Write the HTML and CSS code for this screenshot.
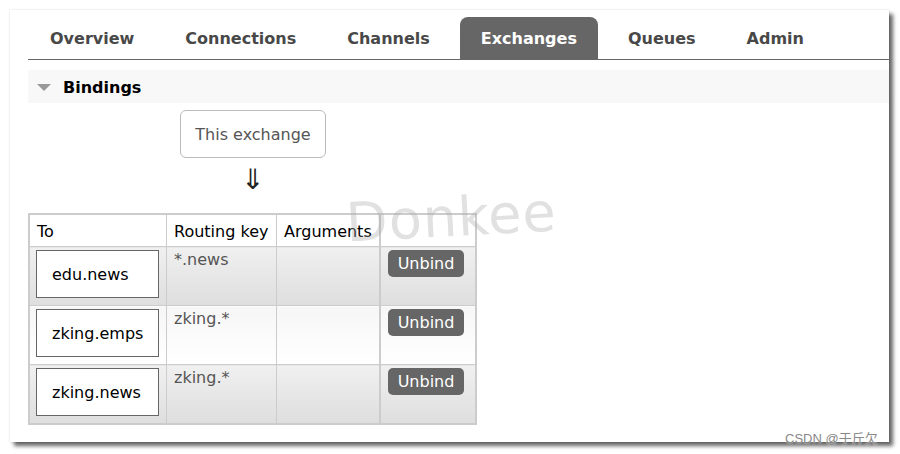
FILE: index.html
```html
<!DOCTYPE html>
<html lang="en">
<head>
    <meta charset="UTF-8">
    <meta name="viewport" content="width=device-width, initial-scale=1.0">
    <title>Exchange Bindings</title>
    <link rel="stylesheet" href="styles.css">
</head>
<body>
    <div class="panel">
        <ul class="tabs">
            <li>Overview</li>
            <li>Connections</li>
            <li>Channels</li>
            <li class="active">Exchanges</li>
            <li>Queues</li>
            <li>Admin</li>
        </ul>

        <div class="section">
            <h2 class="section-head"><span class="toggle"></span>Bindings</h2>
            <div class="flow">
                <div class="exchange-box">This exchange</div>
                <div class="arrow">&dArr;</div>
            </div>

            <table class="list">
                <thead>
                    <tr>
                        <th class="col-to">To</th>
                        <th class="col-key">Routing key</th>
                        <th class="col-args">Arguments</th>
                        <th class="col-action"></th>
                    </tr>
                </thead>
                <tbody>
                    <tr class="alt1">
                        <td><span class="queue">edu.news</span></td>
                        <td class="key">*.news</td>
                        <td></td>
                        <td class="action"><button>Unbind</button></td>
                    </tr>
                    <tr class="alt2">
                        <td><span class="queue">zking.emps</span></td>
                        <td class="key">zking.*</td>
                        <td></td>
                        <td class="action"><button>Unbind</button></td>
                    </tr>
                    <tr class="alt1">
                        <td><span class="queue">zking.news</span></td>
                        <td class="key">zking.*</td>
                        <td></td>
                        <td class="action"><button>Unbind</button></td>
                    </tr>
                </tbody>
            </table>
        </div>
    </div>

    <div class="watermark">Donkee</div>
    <div class="credit">CSDN @于斤欠</div>
</body>
</html>
```

FILE: styles.css
```css
body {
    margin: 0;
    padding: 10px;
    background-color: #fff;
    font-family: "DejaVu Sans", Verdana, sans-serif;
    font-size: 16px;
    color: #000;
    position: relative;
}
.panel {
    background-color: #fff;
    width: 879px;
    height: 432px;
    padding: 7px 0 0 18px;
    box-sizing: border-box;
    box-shadow: 0 0 2px rgba(0, 0, 0, 0.15), 4px 4px 4px rgba(0, 0, 0, 0.6);
}
.tabs {
    display: flex;
    gap: 9px;
    margin: 0;
    padding: 0 0 0 1px;
    list-style: none;
    border-bottom: 1px solid #666;
}
.tabs li {
    height: 42px;
    line-height: 44px;
    padding: 0 21px;
    font-weight: bold;
    font-size: 16px;
    color: #484848;
    border-radius: 8px 8px 0 0;
}
.tabs li.active {
    background-color: #666;
    color: #fff;
}
.section-head {
    margin: 10px 0 0 0;
    height: 33px;
    line-height: 33px;
    padding-top: 2px;
    box-sizing: border-box;
    background-color: #f8f8f8;
    font-size: 16px;
    font-weight: bold;
    display: flex;
    align-items: center;
}
.toggle {
    width: 0;
    height: 0;
    margin: 0 12px 0 9px;
    border-left: 7px solid transparent;
    border-right: 7px solid transparent;
    border-top: 7px solid #999;
}
.flow {
    width: 146px;
    margin: 7px 0 0 152px;
    display: flex;
    flex-direction: column;
    align-items: center;
}
.exchange-box {
    width: 100%;
    height: 48px;
    line-height: 48px;
    box-sizing: border-box;
    border: 1px solid #bbb;
    border-radius: 6px;
    text-align: center;
    color: #555;
}
.arrow {
    height: 55px;
    line-height: 44px;
    font-size: 28px;
    color: #222;
}
.list {
    border-collapse: collapse;
    border: 2px solid #ccc;
}
.list th {
    height: 30px;
    padding: 1px 7px 0 7px;
    text-align: left;
    font-weight: normal;
    border: 1px solid #ccc;
    background-color: #fff;
}
.col-to { width: 122px; }
.col-key { width: 95px; }
.col-args { width: 88px; }
.col-action { width: 80px; border-left: 2px solid #ccc !important; }
.list td {
    height: 59px;
    box-sizing: border-box;
    padding: 3px 6px;
    vertical-align: top;
    border: 1px solid #ccc;
}
.list td.key {
    padding-left: 7px;
}
.list td.action {
    border-left: 2px solid #ccc;
    padding-left: 7px;
}
.alt1 td {
    background: linear-gradient(#f0f0f0, #dedede);
}
.alt2 td {
    background: linear-gradient(#f6f6f6, #ffffff);
}
.queue {
    display: block;
    width: 123px;
    height: 48px;
    line-height: 48px;
    box-sizing: border-box;
    padding-left: 15px;
    border: 1px solid #666;
    background-color: #fff;
}
.key {
    color: #555;
    line-height: 20px;
}
button {
    font-family: "DejaVu Sans", Verdana, sans-serif;
    font-size: 16px;
    color: #fff;
    background-color: #666;
    border: none;
    border-radius: 5px;
    width: 76px;
    height: 27px;
    padding: 0;
    cursor: pointer;
}
.watermark {
    position: absolute;
    left: 346px;
    top: 186px;
    font-family: "DejaVu Sans", sans-serif;
    font-size: 54px;
    letter-spacing: 1px;
    color: rgba(170, 170, 170, 0.35);
    transform: rotate(-3deg);
    pointer-events: none;
}
.credit {
    position: absolute;
    left: 785px;
    top: 428px;
    font-family: "Liberation Sans", "Noto Sans CJK SC", sans-serif;
    font-size: 13px;
    color: #888;
    text-shadow: 0 0 2px #fff;
}
```
